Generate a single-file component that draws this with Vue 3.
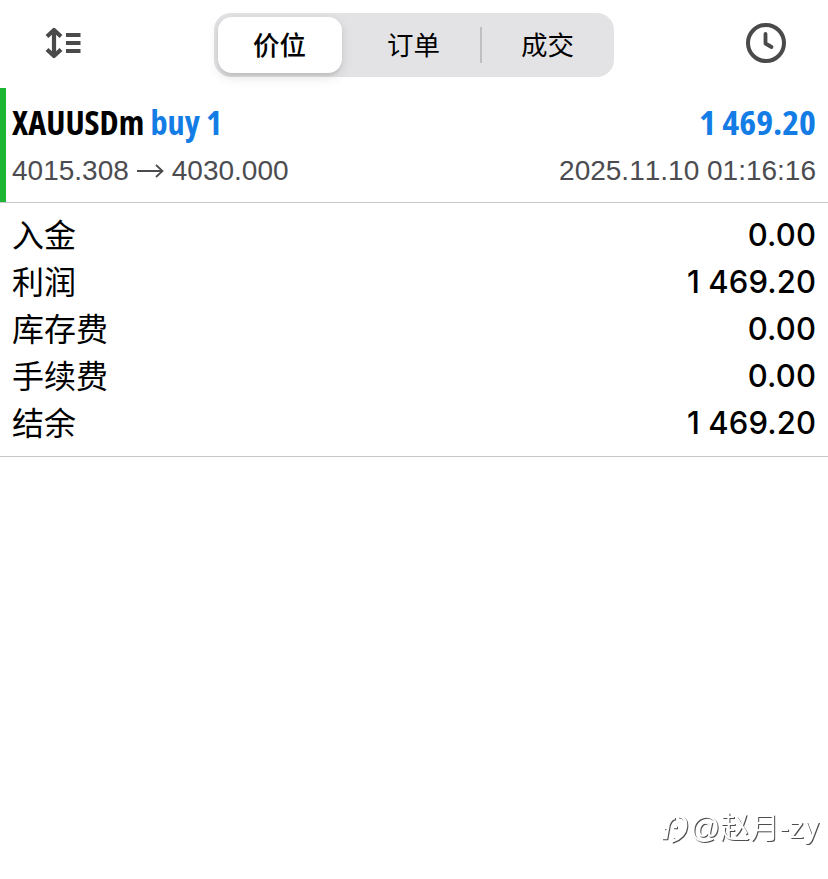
<script setup>
import { ref } from 'vue'

const tabs = ['价位', '订单', '成交']
const activeTab = ref(0)

const summary = [
  { label: '入金', value: '0.00' },
  { label: '利润', value: '1 469.20' },
  { label: '库存费', value: '0.00' },
  { label: '手续费', value: '0.00' },
  { label: '结余', value: '1 469.20' }
]
</script>

<template>
  <div class="history">
    <!-- Toolbar -->
    <header class="toolbar">
      <svg class="sort-icon" width="40" height="34" viewBox="0 0 40 34" fill="none">
        <path d="M10 5V29M3 10.5L10 4L17 10.5M3 23.5L10 30L17 23.5" stroke="#4a4a4a" stroke-width="4.2" stroke-linejoin="round" />
        <path d="M22 9H36.500M22 17H36.500M22 25H36.500" stroke="#4a4a4a" stroke-width="4" />
      </svg>

      <div class="segmented">
        <button
          v-for="(tab, index) in tabs"
          :key="tab"
          class="segment"
          :class="{ active: activeTab === index }"
          @click="activeTab = index"
        >
          {{ tab }}
        </button>
      </div>

      <svg class="clock-icon" width="42" height="42" viewBox="0 0 42 42" fill="none">
        <circle cx="21" cy="21" r="18" stroke="#4a4a4a" stroke-width="4" />
        <path d="M20.500 12V21.500L26.500 25" stroke="#4a4a4a" stroke-width="3.800" stroke-linecap="round" stroke-linejoin="round" />
      </svg>
    </header>

    <!-- Deal -->
    <section class="deal">
      <div class="deal-row">
        <svg class="deal-title" width="230" height="46">
          <text x="0" y="35" textLength="210" lengthAdjust="spacingAndGlyphs">XAUUSDm <tspan class="blue">buy 1</tspan></text>
        </svg>
        <svg class="deal-title" width="118" height="46">
          <text class="blue" x="1" y="35" textLength="117" lengthAdjust="spacingAndGlyphs">1 469.20</text>
        </svg>
      </div>
      <div class="deal-row details">
        <span class="prices">
          4015.308
          <svg class="arrow" width="28" height="16" viewBox="0 0 28 16" fill="none">
            <path d="M1 8H26M20 2L26.500 8L20 14" stroke="#4c4c50" stroke-width="1.8" />
          </svg>
          4030.000
        </span>
        <span>2025.11.10 01:16:16</span>
      </div>
    </section>

    <!-- Totals -->
    <section class="summary">
      <div v-for="item in summary" :key="item.label" class="summary-row">
        <span class="label">{{ item.label }}</span>
        <span class="value">{{ item.value }}</span>
      </div>
    </section>

    <div class="watermark">
      <svg width="29" height="34" viewBox="0 0 29 34" fill="none">
        <path d="M3 17H7Q8 8 14 7M17 5Q26 6 25 16Q24 26 12 30V26M12 16H16M7 17L5 28M1 27H5" stroke="#fff" stroke-width="2.5" />
      </svg>
      <span>@赵月-zy</span>
    </div>
  </div>
</template>

<style>
body {
  background: #fff;
}
</style>

<style scoped>
.history {
  position: relative;
  width: 828px;
  height: 879px;
  overflow: hidden;
  background: #fff;
  color: #000;
  font-family: "Liberation Sans", "Noto Sans CJK SC", sans-serif;
}

.toolbar {
  box-sizing: border-box;
  height: 88px;
  padding: 0 41px 0 44px;
  display: grid;
  grid-template-columns: 170px 400px 1fr;
  align-items: start;
}

.sort-icon {
  margin-top: 26px;
}

.clock-icon {
  margin-top: 22px;
  justify-self: end;
}

.segmented {
  box-sizing: border-box;
  height: 64px;
  margin-top: 13px;
  padding: 4px;
  display: grid;
  grid-template-columns: 124px 140px 1fr;
  border-radius: 17px;
  background: #e3e3e5;
}

.segment {
  margin: 0;
  padding: 0 0 2px;
  border: 0;
  border-radius: 14px;
  background: none;
  color: #000;
  font: 400 26.5px/54px "Noto Sans CJK SC", sans-serif;
}

.segment:nth-child(2) {
  padding-left: 3px;
  background: linear-gradient(#bfbfc3, #bfbfc3) right center / 2px 36px no-repeat;
  border-radius: 0;
}

.segment:nth-child(3) {
  padding-left: 3px;
}

.segment.active {
  padding-right: 1px;
  background: #fff;
  font-weight: 500;
  box-shadow: 0 4px 12px rgba(0, 0, 0, 0.12), 0 3px 2px rgba(0, 0, 0, 0.06);
}

.deal {
  box-sizing: border-box;
  height: 115px;
  padding: 12px 12px 0;
  border-bottom: 1px solid #c8c8ca;
  background: linear-gradient(#1db534, #1db534) left top / 6px 100% no-repeat;
}

.deal-row {
  display: flex;
  justify-content: space-between;
}

.deal-title {
  display: block;
  font-family: "Open Sans", sans-serif;
  font-size: 33.5px;
  font-weight: 700;
  font-stretch: 75%;
}

.blue {
  fill: #147ce5;
}

.details {
  height: 50px;
  line-height: 50px;
  font-size: 28px;
  font-kerning: none;
  color: #4c4c50;
}

.prices {
  display: flex;
  align-items: center;
}

.arrow {
  margin: 0 7.5px;
}

.summary {
  box-sizing: border-box;
  height: 254px;
  padding: 8px 12px 0;
  border-bottom: 1px solid #c8c8ca;
}

.summary-row {
  height: 47px;
  display: flex;
  align-items: center;
  justify-content: space-between;
}

.label {
  padding-bottom: 3px;
  font: 400 32px/44px "Noto Sans CJK SC", sans-serif;
}

.value {
  padding-top: 1px;
  font: 500 31px/46px Inter, sans-serif;
  letter-spacing: 0.1px;
}

.watermark {
  position: absolute;
  right: 9px;
  bottom: 29px;
  display: flex;
  align-items: center;
  color: #fff;
  font: 400 29.7px/44px "Liberation Sans", "Noto Sans CJK SC", sans-serif;
  filter: drop-shadow(1px 1px 0.5px rgba(0, 0, 0, 0.7));
}
</style>
